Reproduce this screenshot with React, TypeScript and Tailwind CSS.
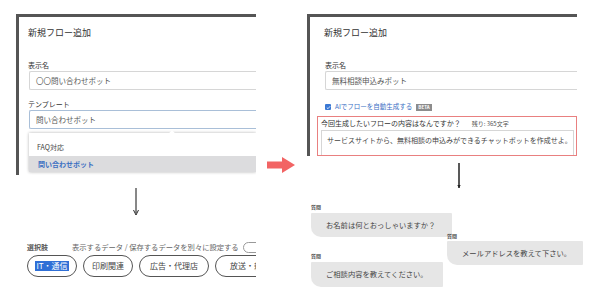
import React from "react";

const Label = ({ children }: { children: React.ReactNode }) => (
  <div className="h-[10px] leading-[10px] text-[7px] text-[#333]">{children}</div>
);

const Bubble = ({ text, w, h }: { text: string; w: string; h: string }) => (
  <div
    className={`${w} ${h} bg-[#e6e6e6] rounded-[1px] rounded-bl-[10px] flex items-center pl-[15px] text-[7.3px] text-[#444] whitespace-nowrap`}
  >
    {text}
  </div>
);

const Question = () => (
  <div className="h-[6px] leading-[6px] text-[5px] font-bold text-[#555]">質問</div>
);

export default function App() {
  return (
    <div className="w-[597px] h-[301px] bg-white overflow-hidden flex font-['Noto_Sans_CJK_JP',sans-serif] text-[#333]">
      {/* 左: テンプレート選択 */}
      <div className="ml-[16px] w-[240px] shrink-0 flex flex-col overflow-hidden">
        <div className="mt-[14px] h-[161px] border-t-[3px] border-l-[3px] border-[#555] pl-[9px] pt-[9px] overflow-hidden">
          <div className="h-[14px] leading-[14px] text-[9px] text-[#333]">新規フロー追加</div>
          <div className="mt-[20px]">
            <Label>表示名</Label>
          </div>
          <div className="mt-[1px] ml-[1px] h-[19px] border border-r-0 border-[#d6d6d6] rounded-l-[2px] flex items-center pl-[6px] text-[7.5px] text-[#555]">
            〇〇問い合わせボット
          </div>
          <div className="mt-[9px]">
            <Label>テンプレート</Label>
          </div>
          <div className="mt-[1px] ml-[1px] h-[19px] border border-r-0 border-[#a9bfd8] rounded-l-[2px] flex items-center pl-[6px] text-[7.5px] text-[#555]">
            問い合わせボット
          </div>
          <div className="relative mt-[4px] ml-[1px] pt-[6px] bg-white shadow-[0_0_3px_rgba(0,0,0,0.3)]">
            <div className="absolute -top-[2px] left-[141px] w-[4px] h-[4px] rotate-45 bg-white" />
            <div className="h-[17px] flex items-center pl-[8px] text-[7px] text-[#444]">FAQ対応</div>
            <div className="h-[16px] flex items-center pl-[9px] bg-[#dcdcde] text-[7px] font-bold text-[#3b6fc2]">
              問い合わせボット
            </div>
          </div>
        </div>

        <div className="mt-[13px] flex justify-center">
          <svg width="6" height="27" viewBox="0 0 6 27">
            <line x1="3" y1="0" x2="3" y2="25" stroke="#111" strokeWidth="1" />
            <path d="M0.5 22 L3 27 L5.5 22" fill="none" stroke="#111" strokeWidth="0.9" />
          </svg>
        </div>

        <div className="mt-[27px] pl-[11px] h-[10px] flex items-center whitespace-nowrap">
          <span className="w-[45px] shrink-0 text-[7px] font-bold text-[#555]">選択肢</span>
          <span className="shrink-0 text-[7.3px] text-[#666]">表示するデータ / 保存するデータを別々に設定する</span>
          <span className="ml-[4px] w-[24px] h-[11px] shrink-0 rounded-full border border-[#999]" />
        </div>
        <div className="mt-[3px] pl-[11px] flex gap-[6px] whitespace-nowrap">
          {[
            { t: "IT・通信", w: "w-[50px]", sel: true },
            { t: "印刷関連", w: "w-[50px]", sel: false },
            { t: "広告・代理店", w: "w-[70px]", sel: false },
            { t: "放送・新聞", w: "w-[70px]", sel: false },
          ].map((p) => (
            <div
              key={p.t}
              className={`${p.w} h-[22px] shrink-0 rounded-full border-[1.3px] border-[#555] flex items-center justify-center text-[8px] text-[#444]`}
            >
              {p.sel ? (
                <span className="bg-[#2f6fd6] text-white leading-[10px] px-[1px]">{p.t}</span>
              ) : (
                p.t
              )}
            </div>
          ))}
        </div>
      </div>

      {/* 赤い矢印 */}
      <div className="w-[51px] shrink-0">
        <svg className="ml-[11px] mt-[157px]" width="28" height="16" viewBox="0 0 28 16">
          <rect x="0" y="4.5" width="16" height="7" fill="#f26464" />
          <path d="M15 0 L28 8 L15 16 Z" fill="#f26464" />
        </svg>
      </div>

      {/* 右: AI生成 */}
      <div className="w-[290px] shrink-0 flex flex-col">
        <div className="mt-[14px] w-[270px] border-t-[3px] border-l-[3px] border-[#555] pl-[7px] pt-[9px] overflow-hidden">
          <div className="ml-[7px] h-[14px] leading-[14px] text-[9px] text-[#333]">新規フロー追加</div>
          <div className="mt-[20px] ml-[8px]">
            <Label>表示名</Label>
          </div>
          <div className="mt-[1px] ml-[8px] h-[19px] border border-r-0 border-[#d6d6d6] rounded-l-[2px] flex items-center pl-[6px] text-[7.5px] text-[#555]">
            無料相談申込みボット
          </div>
          <div className="mt-[12px] ml-[8px] h-[10px] flex items-center gap-[4px] whitespace-nowrap">
            <span className="w-[6px] h-[6px] bg-[#3a78d4] rounded-[1px] flex items-center justify-center">
              <svg width="5" height="5" viewBox="0 0 5 5">
                <path d="M0.8 2.6 L2 3.7 L4.2 1.2" fill="none" stroke="#fff" strokeWidth="0.8" />
              </svg>
            </span>
            <span className="text-[6.5px] text-[#3a6fc4]">AIでフローを自動生成する</span>
            <span className="h-[7px] px-[2px] bg-[#8c8c8c] text-white text-[4.5px] leading-[7px] font-bold">BETA</span>
          </div>
          <div className="mt-[4px] h-[40px] border-[1.5px] border-[#e98080] pl-[3px] pr-[2px] flex flex-col">
            <div className="h-[13px] flex items-center whitespace-nowrap">
              <span className="text-[7px] text-[#333]">今回生成したいフローの内容はなんですか？</span>
              <span className="ml-[11px] text-[6px] text-[#555]">残り: 365文字</span>
            </div>
            <div className="flex-1 border border-b-0 border-[#d6d6d6] pl-[5px] pt-[4px] text-[7px] leading-[10px] text-[#444] whitespace-nowrap">
              サービスサイトから、無料相談の申込みができるチャットボットを作成せよ。
            </div>
          </div>
        </div>

        <div className="mt-[7px] ml-[150px]">
          <svg width="4" height="25" viewBox="0 0 4 25">
            <line x1="2" y1="0" x2="2" y2="25" stroke="#222" strokeWidth="1.5" />
            <path d="M0.3 22 L2 25 L3.7 22 Z" fill="#222" />
          </svg>
        </div>

        <div className="mt-[16px] ml-[4px] flex">
          <div className="w-[136px] shrink-0 flex flex-col">
            <Question />
            <div className="mt-[3px]">
              <Bubble text="お名前は何とおっしゃいますか？" w="w-[141px]" h="h-[24px]" />
            </div>
            <div className="mt-[16px]">
              <Question />
            </div>
            <div className="mt-[3px]">
              <Bubble text="ご相談内容を教えてください。" w="w-[132px]" h="h-[25px]" />
            </div>
          </div>
          <div className="mt-[29px] w-[136px] shrink-0 flex flex-col">
            <Question />
            <div className="mt-[2px]">
              <Bubble text="メールアドレスを教えて下さい。" w="w-[136px]" h="h-[24px]" />
            </div>
          </div>
        </div>
      </div>
    </div>
  );
}
